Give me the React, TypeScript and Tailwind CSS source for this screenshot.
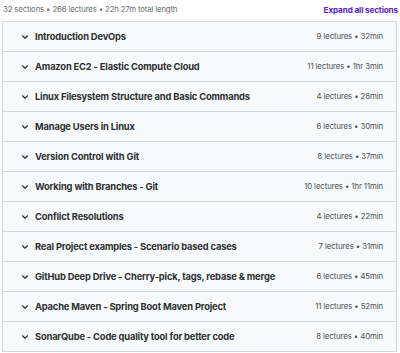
import React from "react";

const sections: [string, string][] = [
  ["Introduction DevOps", "9 lectures • 32min"],
  ["Amazon EC2 - Elastic Compute Cloud", "11 lectures • 1hr 3min"],
  ["Linux Filesystem Structure and Basic Commands", "4 lectures • 28min"],
  ["Manage Users in Linux", "6 lectures • 30min"],
  ["Version Control with Git", "8 lectures • 37min"],
  ["Working with Branches - Git", "10 lectures • 1hr 11min"],
  ["Conflict Resolutions", "4 lectures • 22min"],
  ["Real Project examples - Scenario based cases", "7 lectures • 31min"],
  ["GitHub Deep Drive - Cherry-pick, tags, rebase & merge", "6 lectures • 45min"],
  ["Apache Maven - Spring Boot Maven Project", "11 lectures • 52min"],
  ["SonarQube - Code quality tool for better code", "8 lectures • 40min"],
];

function Chevron() {
  return (
    <svg width="8" height="8" viewBox="0 0 8 8" className="shrink-0">
      <path d="M1.5 2.8 L4 5.2 L6.5 2.8" fill="none" stroke="#2d2f31" strokeWidth="1.2" strokeLinecap="round" strokeLinejoin="round" />
    </svg>
  );
}

export default function App() {
  return (
    <div className="w-[400px] h-[353px] bg-white overflow-hidden" style={{ fontFamily: "Inter, 'Liberation Sans', sans-serif" }}>
      <div className="flex items-center justify-between h-[20px] pl-[3px] pr-[2px]">
        <span className="text-[7.8px] text-[#6a6f73] tracking-[-0.15px]">32 sections • 266 lectures • 22h 27m total length</span>
        <span className="text-[8.2px] font-bold text-[#5624d0] tracking-[-0.15px]">Expand all sections</span>
      </div>
      <div className="mx-[2px] w-[395px] border-x border-b border-[#d1d7dc] mt-[1px]">
        {sections.map(([title, meta]) => (
          <div key={title} className="flex items-center h-[30px] border-t border-[#d1d7dc] bg-[#f7f9fa] pl-[18px] pr-[13px]">
            <Chevron />
            <span className="ml-[6px] text-[9.3px] font-bold text-[#2d2f31] tracking-[-0.15px] flex-1 whitespace-nowrap">{title}</span>
            <span className="text-[7.8px] text-[#4d5154] tracking-[-0.1px] whitespace-nowrap">{meta}</span>
          </div>
        ))}
      </div>
    </div>
  );
}
